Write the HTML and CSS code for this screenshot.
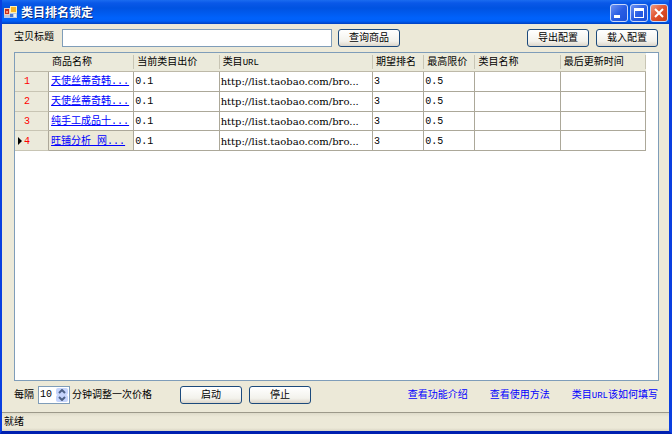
FILE: index.html
```html
<!DOCTYPE html>
<html lang="zh-CN">
<head>
    <meta charset="UTF-8">
    <meta name="viewport" content="width=device-width, initial-scale=1.0">
    <title>类目排名锁定</title>
    <link rel="stylesheet" href="styles.css">
</head>
<body>
    <div class="window">
        <header class="titlebar">
            <svg class="app-icon" width="13" height="13" viewBox="0 0 13 13">
                <rect x="0" y="2" width="13" height="10" fill="#b9c9e4"/>
                <rect x="6" y="0" width="7" height="7" fill="#fff0b0"/>
                <rect x="7" y="1" width="5" height="5" fill="#f5b528"/>
                <rect x="0" y="2" width="6" height="7" fill="#f3d0c0"/>
                <rect x="1" y="3" width="4" height="5" fill="#c8301c"/>
                <rect x="2" y="5" width="2" height="2" fill="#f39a80"/>
                <rect x="6" y="8" width="3" height="3" fill="#4878d0"/>
                <rect x="10" y="8" width="2" height="3" fill="#e8eef8"/>
            </svg>
            <h1>类目排名锁定</h1>
            <div class="window-buttons">
                <button type="button" aria-label="最小化">
                    <svg width="16" height="16" viewBox="0 0 16 16"><rect x="3" y="10" width="6" height="3" fill="#fff"/></svg>
                </button>
                <button type="button" aria-label="最大化">
                    <svg width="16" height="16" viewBox="0 0 16 16"><path d="M3 3h10v10H3zM4 6v6h8V6z" fill="#fff" fill-rule="evenodd"/></svg>
                </button>
                <button type="button" class="close" aria-label="关闭">
                    <svg width="16" height="16" viewBox="0 0 16 16"><path d="M4 4l8 8M12 4l-8 8" stroke="#fff" stroke-width="2"/></svg>
                </button>
            </div>
        </header>

        <main>
            <form class="toolbar">
                <label for="title">宝贝标题</label>
                <input type="text" id="title">
                <button type="button" class="btn">查询商品</button>
                <div class="config-buttons">
                    <button type="button" class="btn">导出配置</button>
                    <button type="button" class="btn">载入配置</button>
                </div>
            </form>

            <div class="grid">
                <table>
                    <colgroup>
                        <col class="col-row">
                        <col class="col-mid">
                        <col class="col-mid">
                        <col class="col-url">
                        <col class="col-small">
                        <col class="col-small">
                        <col class="col-mid">
                        <col class="col-mid">
                    </colgroup>
                    <thead>
                        <tr>
                            <th></th>
                            <th>商品名称</th>
                            <th>当前类目出价</th>
                            <th>类目<span class="latin">URL</span></th>
                            <th>期望排名</th>
                            <th>最高限价</th>
                            <th>类目名称</th>
                            <th>最后更新时间</th>
                        </tr>
                    </thead>
                    <tbody>
                        <tr>
                            <th>1</th>
                            <td><a href="#">天使丝蒂奇韩...</a></td>
                            <td>0.1</td>
                            <td class="url">http://list.taobao.com/bro...</td>
                            <td>3</td>
                            <td>0.5</td>
                            <td></td>
                            <td></td>
                        </tr>
                        <tr>
                            <th>2</th>
                            <td><a href="#">天使丝蒂奇韩...</a></td>
                            <td>0.1</td>
                            <td class="url">http://list.taobao.com/bro...</td>
                            <td>3</td>
                            <td>0.5</td>
                            <td></td>
                            <td></td>
                        </tr>
                        <tr>
                            <th>3</th>
                            <td><a href="#">纯手工成品十...</a></td>
                            <td>0.1</td>
                            <td class="url">http://list.taobao.com/bro...</td>
                            <td>3</td>
                            <td>0.5</td>
                            <td></td>
                            <td></td>
                        </tr>
                        <tr class="current">
                            <th>4</th>
                            <td><a href="#">旺铺分析 网...</a></td>
                            <td>0.1</td>
                            <td class="url">http://list.taobao.com/bro...</td>
                            <td>3</td>
                            <td>0.5</td>
                            <td></td>
                            <td></td>
                        </tr>
                    </tbody>
                </table>
            </div>

            <div class="actions">
                <label for="interval">每隔</label>
                <div class="spinner">
                    <input type="text" id="interval" value="10">
                    <div class="spin-buttons">
                        <button type="button" aria-label="增加"><svg width="8" height="5" viewBox="0 0 8 5"><path d="M1 4l3-3 3 3" fill="none" stroke="#4d6185" stroke-width="2"/></svg></button>
                        <button type="button" aria-label="减少"><svg width="8" height="5" viewBox="0 0 8 5"><path d="M1 1l3 3 3-3" fill="none" stroke="#4d6185" stroke-width="2"/></svg></button>
                    </div>
                </div>
                <span>分钟调整一次价格</span>
                <div class="run-buttons">
                    <button type="button" class="btn">启动</button>
                    <button type="button" class="btn">停止</button>
                </div>
                <nav>
                    <a href="#">查看功能介绍</a>
                    <a href="#">查看使用方法</a>
                    <a href="#">类目<span class="latin">URL</span>该如何填写</a>
                </nav>
            </div>
        </main>

        <footer>就绪</footer>
    </div>
</body>
</html>
```

FILE: styles.css
```css
* {
    box-sizing: border-box;
}

body {
    margin: 0;
    font-family: "Liberation Mono", "Noto Sans CJK SC", monospace;
    font-size: 10px;
    line-height: 16px;
    color: #000;
}

input, button {
    font: inherit;
    color: inherit;
    margin: 0;
    padding: 0;
}

.window {
    display: flex;
    flex-direction: column;
    min-height: 100vh;
    background-color: #ece9d8;
    border: solid #0a3fe0;
    border-width: 0 3px 3px 2px;
    border-bottom-color: #0020b0;
}

/* Title bar */
.titlebar {
    display: flex;
    align-items: center;
    height: 24px;
    padding: 1px 1px 0 2px;
    background: linear-gradient(#1a6cf0 0, #0a58e8 3px, #0053e1 8px, #0062fb 18px, #0060f8 21px, #0040c0 24px);
}

h1 {
    flex: 1;
    margin: 0 0 0 4px;
    padding-top: 2px;
    font-size: 12px;
    color: #fff;
    text-shadow: 1px 1px #0a2a80;
}

.window-buttons {
    display: flex;
    gap: 2px;
}

.window-buttons button {
    display: flex;
    align-items: center;
    justify-content: center;
    width: 18px;
    height: 18px;
    border: 1px solid #c8d8fa;
    border-radius: 3px;
    background: linear-gradient(135deg, #6d92f2, #2a5ee4 50%, #1c50d8);
}

.window-buttons .close {
    background: linear-gradient(135deg, #f09a80, #e0502c 50%, #c83c14);
}

main {
    flex: 1;
    display: flex;
    flex-direction: column;
    padding: 5px 10px 8px 12px;
}

/* Search row */
.toolbar {
    display: flex;
    align-items: center;
    margin-bottom: 5px;
}

.toolbar label {
    margin-right: 8px;
}

.toolbar input {
    flex: 0 1 270px;
    min-width: 0;
    height: 18px;
    margin-right: 6px;
    padding: 0 3px;
    border: 1px solid #7f9db9;
    background-color: #fff;
}

.btn {
    width: 62px;
    height: 18px;
    padding-top: 1px;
    line-height: 15px;
    border: 1px solid #1c4a7c;
    border-radius: 3px;
    background: linear-gradient(#fff, #f3f2ec 70%, #dcd6ca);
}

.config-buttons {
    display: flex;
    gap: 7px;
    margin-left: auto;
    margin-right: 1px;
}

/* Data grid */
.grid {
    flex: 1;
    border: 1px solid #7f9db9;
    background-color: #fff;
}

table {
    table-layout: fixed;
    width: 631px;
    height: 98px;
    border-collapse: separate;
    border-spacing: 0;
}

.col-row { width: 34px; }
.col-mid { width: 85px; }
.col-url { width: 153px; }
.col-small { width: 51px; }

th, td {
    padding: 2px 2px 0;
    font-weight: normal;
    text-align: left;
    white-space: nowrap;
    line-height: 14px;
}

td {
    overflow: hidden;
    border-right: 1px solid #aca899;
    border-bottom: 1px solid #aca899;
}

td:not(:nth-child(2)) {
    padding-left: 1px;
}

td a {
    color: #00f;
}

td.url {
    font-family: "DejaVu Serif", serif;
}

thead th {
    height: 19px;
    padding: 1px 3px 0;
    background: linear-gradient(#c8c5b4, #c8c5b4) right center / 1px 14px no-repeat #ebeadb;
    border-bottom: 1px solid #bdb9a8;
}

thead th:first-child {
    background-image: none;
}

tbody th {
    padding-left: 9px;
    color: #f00;
    background-color: #ebeadb;
    border-right: 1px solid #aca899;
    border-bottom: 1px solid #c8c5b4;
}

.current th {
    padding-left: 3px;
}

/* black arrow in front of the current row */
.current th::before {
    content: "";
    display: inline-block;
    margin-right: 2px;
    border: solid transparent;
    border-width: 4px 0 4px 4px;
    border-left-color: #000;
    vertical-align: middle;
}

.current td:nth-child(2) {
    background-color: #ece9d8;
}

/* Bottom row */
.actions {
    display: flex;
    align-items: center;
    margin-top: 5px;
}

.actions > label, .actions > span, nav {
    padding-top: 2px;
}

.spinner {
    display: flex;
    width: 32px;
    height: 18px;
    margin: 0 2px 0 4px;
    padding: 1px;
    border: 1px solid #7f9db9;
    background-color: #fff;
}

.spinner input {
    flex: 1;
    min-width: 0;
    border: none;
    background: none;
}

.spin-buttons {
    display: flex;
    flex-direction: column;
    width: 12px;
}

.spin-buttons button {
    flex: 1;
    display: flex;
    align-items: center;
    justify-content: center;
    min-height: 0;
    border: none;
    border-radius: 2px;
    background-color: #c6d5fc;
}

.run-buttons {
    display: flex;
    gap: 7px;
    margin-left: 28px;
}

nav {
    display: flex;
    gap: 22px;
    margin-left: auto;
    margin-right: 1px;
}

nav a {
    color: #00f;
    text-decoration: none;
}

.latin {
    font-size: 9px;
}

footer {
    height: 19px;
    padding: 2px 2px 0;
    border-top: 1px solid #9c998a;
    background: linear-gradient(#dedbca, #ece9d8 4px, #ece9d8 15px, #d8d4c4);
}
```
